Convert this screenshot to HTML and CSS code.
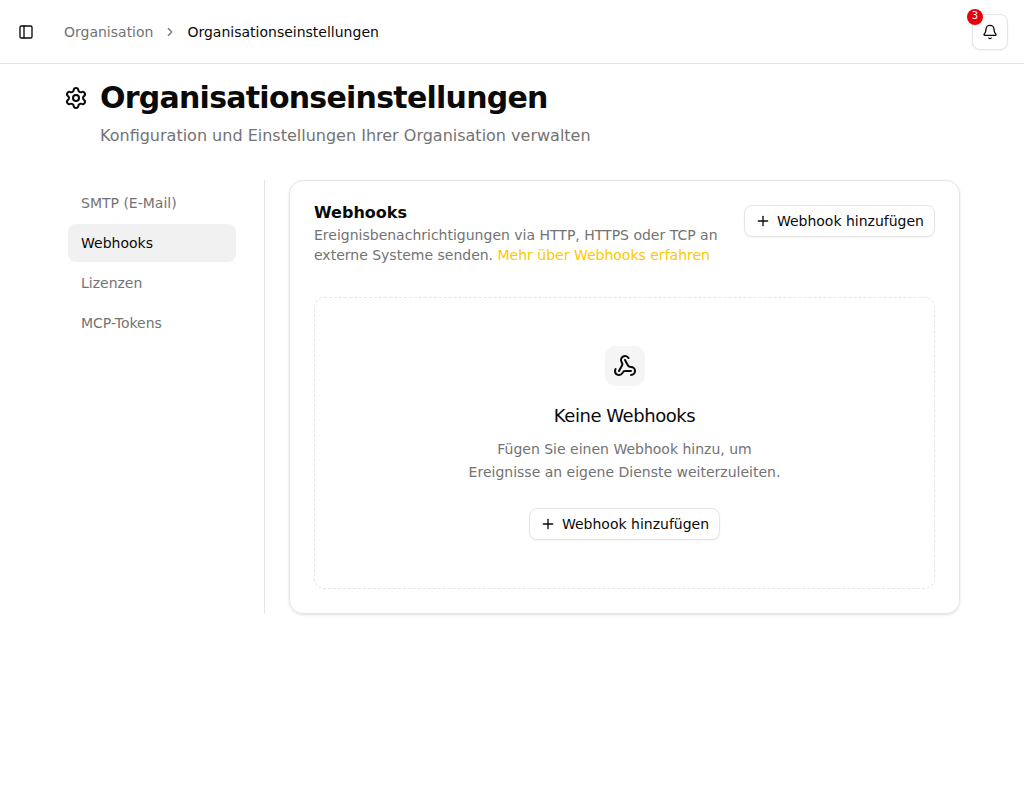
FILE: index.html
```html
<!DOCTYPE html>
<html lang="de">
<head>
    <meta charset="UTF-8">
    <meta name="viewport" content="width=device-width, initial-scale=1.0">
    <title>Organisationseinstellungen</title>
    <link rel="stylesheet" href="styles.css">
</head>
<body>
    <header class="topbar">
        <button class="sidebar-toggle" aria-label="Seitenleiste umschalten">
            <svg class="icon" viewBox="0 0 24 24"><rect width="18" height="18" x="3" y="3" rx="2"/><path d="M9 3v18"/></svg>
        </button>
        <nav class="breadcrumb">
            <a href="#">Organisation</a>
            <svg class="icon chevron" viewBox="0 0 24 24"><path d="m9 18 6-6-6-6"/></svg>
            <span>Organisationseinstellungen</span>
        </nav>
        <button class="bell" aria-label="Benachrichtigungen">
            <svg class="icon" viewBox="0 0 24 24"><path d="M10.268 21a2 2 0 0 0 3.464 0"/><path d="M3.262 15.326A1 1 0 0 0 4 17h16a1 1 0 0 0 .74-1.673C19.41 13.956 18 12.499 18 8A6 6 0 0 0 6 8c0 4.499-1.411 5.956-2.738 7.326"/></svg>
            <span class="badge">3</span>
        </button>
    </header>

    <main class="container">
        <div class="page-title">
            <svg class="icon icon-lg" viewBox="0 0 24 24"><path d="M9.671 4.136a2.34 2.34 0 0 1 4.659 0 2.34 2.34 0 0 0 3.319 1.915 2.34 2.34 0 0 1 2.33 4.033 2.34 2.34 0 0 0 0 3.831 2.34 2.34 0 0 1-2.33 4.033 2.34 2.34 0 0 0-3.319 1.915 2.34 2.34 0 0 1-4.659 0 2.34 2.34 0 0 0-3.32-1.915 2.34 2.34 0 0 1-2.33-4.033 2.34 2.34 0 0 0 0-3.831A2.34 2.34 0 0 1 6.35 6.051a2.34 2.34 0 0 0 3.319-1.915"/><circle cx="12" cy="12" r="3"/></svg>
            <h1>Organisationseinstellungen</h1>
        </div>
        <p class="subtitle">Konfiguration und Einstellungen Ihrer Organisation verwalten</p>

        <div class="settings">
            <nav class="tabs">
                <a href="#">SMTP (E-Mail)</a>
                <a href="#" class="active">Webhooks</a>
                <a href="#">Lizenzen</a>
                <a href="#">MCP-Tokens</a>
            </nav>

            <section class="card">
                <div class="card-header">
                    <div class="card-text">
                        <h2>Webhooks</h2>
                        <p>Ereignisbenachrichtigungen via HTTP, HTTPS oder TCP an externe Systeme senden. <a href="#">Mehr über Webhooks erfahren</a></p>
                    </div>
                    <button class="btn">
                        <svg class="icon" viewBox="0 0 24 24"><path d="M5 12h14"/><path d="M12 5v14"/></svg>
                        Webhook hinzufügen
                    </button>
                </div>

                <div class="empty">
                    <div class="empty-icon">
                        <svg class="icon icon-lg" viewBox="0 0 24 24"><path d="M18 16.98h-5.99c-1.1 0-1.95.94-2.48 1.9A4 4 0 0 1 2 17c.01-.7.2-1.4.57-2"/><path d="m6 17 3.13-5.78c.53-.97.1-2.18-.5-3.1a4 4 0 1 1 6.89-4.06"/><path d="m12 6 3.13 5.73C15.66 12.7 16.9 13 18 13a4 4 0 0 1 0 8"/></svg>
                    </div>
                    <h3>Keine Webhooks</h3>
                    <p>Fügen Sie einen Webhook hinzu, um Ereignisse an eigene Dienste weiterzuleiten.</p>
                    <button class="btn">
                        <svg class="icon" viewBox="0 0 24 24"><path d="M5 12h14"/><path d="M12 5v14"/></svg>
                        Webhook hinzufügen
                    </button>
                </div>
            </section>
        </div>
    </main>
</body>
</html>
```
FILE: styles.css
```css
* {
    box-sizing: border-box;
}

body {
    margin: 0;
    font-family: "DejaVu Sans", sans-serif;
    font-size: 14px;
    line-height: 20px;
    color: #0a0a0a;
    background-color: #fff;
}

h1, h2, h3, p {
    margin: 0;
}

a {
    color: inherit;
    text-decoration: none;
}

button {
    font: inherit;
    color: inherit;
    background-color: #fff;
    cursor: pointer;
}

.icon {
    width: 16px;
    height: 16px;
    flex-shrink: 0;
    fill: none;
    stroke: currentColor;
    stroke-width: 2;
    stroke-linecap: round;
    stroke-linejoin: round;
}

.icon-lg {
    width: 24px;
    height: 24px;
}

/* Top bar */
.topbar {
    display: flex;
    align-items: center;
    height: 64px;
    padding: 0 16px 0 12px;
    border-bottom: 1px solid #e5e5e5;
}

.sidebar-toggle {
    display: flex;
    align-items: center;
    justify-content: center;
    width: 28px;
    height: 28px;
    margin-right: 24px;
    padding: 0;
    border: none;
}

.breadcrumb {
    display: flex;
    align-items: center;
    gap: 10px;
}

.breadcrumb a,
.chevron {
    color: #737373;
}

.breadcrumb .chevron {
    width: 14px;
    height: 14px;
}

.bell {
    position: relative;
    display: flex;
    align-items: center;
    justify-content: center;
    width: 36px;
    height: 36px;
    margin-left: auto;
    padding: 0;
    border: 1px solid #e5e5e5;
    border-radius: 8px;
    box-shadow: 0 1px 2px rgba(0, 0, 0, 0.05);
}

.badge {
    position: absolute;
    top: -6px;
    left: -6px;
    width: 16px;
    height: 16px;
    border-radius: 50%;
    background-color: #e7000b;
    color: #fff;
    font-size: 10px;
    line-height: 14px;
    text-align: center;
}

/* Page */
.container {
    padding: 16px 64px;
}

.page-title {
    display: flex;
    align-items: center;
    gap: 12px;
}

h1 {
    font-size: 30px;
    line-height: 36px;
    letter-spacing: -0.025em;
}

.subtitle {
    margin: 8px 0 32px 36px;
    font-size: 16px;
    line-height: 24px;
    color: #737373;
}

.settings {
    display: flex;
    gap: 24px;
}

.tabs {
    display: flex;
    flex-direction: column;
    gap: 2px;
    width: 201px;
    flex-shrink: 0;
    padding: 4px 28px 4px 4px;
    border-right: 1px solid #e5e5e5;
}

.tabs a {
    padding: 9px 13px;
    border-radius: 8px;
    color: #737373;
}

.tabs .active {
    background-color: #f1f1f1;
    color: #0a0a0a;
}

/* Card */
.card {
    flex: 1;
    padding: 24px;
    border: 1px solid #e5e5e5;
    border-radius: 14px;
    box-shadow: 0 1px 3px rgba(0, 0, 0, 0.1), 0 1px 2px -1px rgba(0, 0, 0, 0.1);
}

.card-header {
    display: flex;
    align-items: flex-start;
    justify-content: space-between;
    gap: 16px;
    margin-bottom: 32px;
}

.card-text h2 {
    margin-bottom: 4px;
    font-size: 16px;
    line-height: 16px;
}

.card-text p {
    color: #737373;
}

.card-text a {
    color: #fcc800;
}

.btn {
    display: flex;
    align-items: center;
    gap: 6px;
    height: 32px;
    flex-shrink: 0;
    padding: 0 10px;
    border: 1px solid #e5e5e5;
    border-radius: 8px;
    box-shadow: 0 1px 2px rgba(0, 0, 0, 0.05);
    white-space: nowrap;
}

/* Empty state */
.empty {
    display: flex;
    flex-direction: column;
    align-items: center;
    padding: 48px;
    border: 1px dashed #e5e5e5;
    border-radius: 10px;
    text-align: center;
}

.empty-icon {
    display: flex;
    align-items: center;
    justify-content: center;
    width: 40px;
    height: 40px;
    margin-bottom: 16px;
    border-radius: 10px;
    background-color: #f5f5f5;
}

.empty h3 {
    margin-bottom: 8px;
    font-size: 18px;
    font-weight: 400;
    line-height: 28px;
    letter-spacing: -0.025em;
}

.empty p {
    max-width: 320px;
    margin-bottom: 24px;
    line-height: 22.75px;
    color: #737373;
}
```
